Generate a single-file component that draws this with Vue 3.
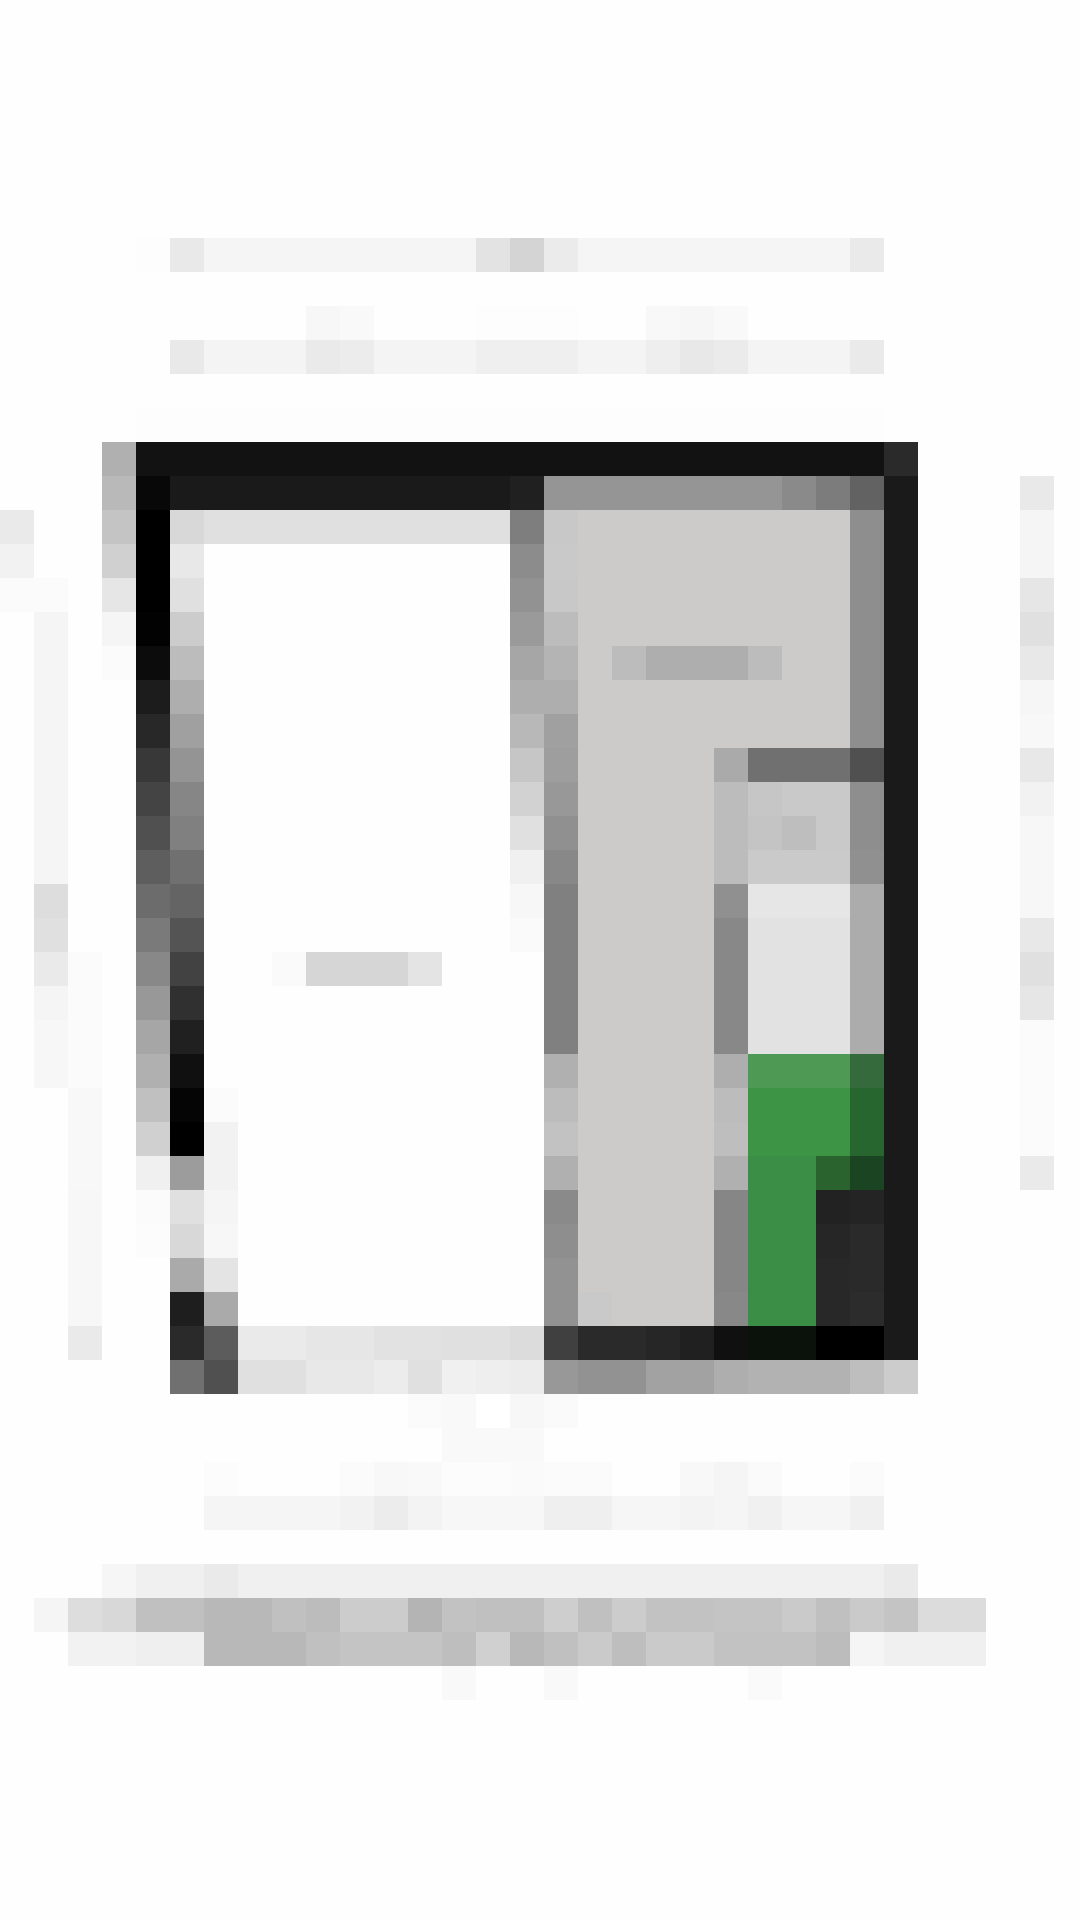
<script setup>
import { computed } from 'vue'

const COLS = 32
const ROWS = 57
const PAPER = 'fe'
const W = 'cccbc9' // warm grey panel
const G = '3b8e45' // green block

// Sparse mosaic: row -> "col:tone" or "from-to:tone". Two hex digits = grey, six = full colour.
const spec = {
  7: '4:fd 5:e9 6-13:f5 14:e3 15:d4 16:eb 17-24:f5 25:ea',
  9: '9:f7 10:f9 14-16:fd 19:f8 20:f6 21:f9',
  10: '5:e9 6-8:f4 9:ea 10:ec 11-13:f4 14-16:ef 17-18:f4 19:ee 20:e8 21:eb 22-24:f4 25:ea',
  12: '4-25:fd',
  13: '3:b0 4-25:12 26:2a',
  14: '3:b9 4:08 5-14:1a 15:20 16-22:95 23:8a 24:7c 25:62 26:1a 30:e9',
  15: `0:ea 3:c4 4:00 5:d8 6-14:e0 15:7e 16:c8 17-24:${W} 25:8e 26:1a 30:f5`,
  16: `0:f2 3:d0 4:00 5:e8 15:8c 16:c9 17-24:${W} 25:8e 26:1a 30:f5`,
  17: `0:fb 1:fb 3:e6 4:00 5:e0 15:92 16:c8 17-24:${W} 25:8e 26:1a 30:e6`,
  18: `1:f5 3:f5 4:02 5:cc 15:9a 16:bc 17-24:${W} 25:8e 26:1a 30:e0`,
  19: `1:f5 3:fb 4:0c 5:bc 15:a6 16:b4 17:${W} 18:bc 19-21:ae 22:bc 23-24:${W} 25:8e 26:1a 30:e8`,
  20: `1:f5 4:1c 5:ae 15:ae 16:ae 17-24:${W} 25:8e 26:1a 30:f6`,
  21: `1:f5 4:28 5:a0 15:b8 16:a0 17-24:${W} 25:8e 26:1a 30:f8`,
  22: `1:f5 4:38 5:94 15:c6 16:9e 17-20:${W} 21:aa 22-24:70 25:50 26:1a 30:e8`,
  23: `1:f5 4:44 5:86 15:d2 16:98 17-20:${W} 21:bc 22:c6 23-24:c9 25:8e 26:1a 30:f2`,
  24: `1:f5 4:50 5:80 15:e0 16:90 17-20:${W} 21:bc 22:c4 23:be 24:c9 25:8e 26:1a 30:f7`,
  25: `1:f5 4:5e 5:70 15:f0 16:88 17-20:${W} 21:bc 22-24:ca 25:90 26:1a 30:f7`,
  26: `1:dd 4:6c 5:64 15:f7 16:80 17-20:${W} 21:90 22-24:e6 25:ac 26:1a 30:f7`,
  27: `1:e0 4:7a 5:54 15:fa 16:80 17-20:${W} 21:88 22-24:e2 25:ac 26:1a 30:e8`,
  28: `1:ea 2:fb 4:88 5:42 8:fa 9-11:d6 12:e4 16:80 17-20:${W} 21:88 22-24:e2 25:ac 26:1a 30:e0`,
  29: `1:f5 2:fb 4:98 5:30 16:80 17-20:${W} 21:88 22-24:e2 25:ac 26:1a 30:e6`,
  30: `1:f7 2:fb 4:a6 5:20 16:80 17-20:${W} 21:88 22-24:e2 25:ac 26:1a 30:fb`,
  31: `1:f7 2:fb 4:b0 5:10 16:b0 17-20:${W} 21:ae 22-24:4e9a55 25:356b3c 26:1a 30:fb`,
  32: `2:f8 4:c0 5:05 6:fb 16:bc 17-20:${W} 21:bc 22-24:3d9445 25:27662f 26:1a 30:fb`,
  33: `2:f8 4:d0 5:00 6:f2 16:c2 17-20:${W} 21:be 22-24:3d9445 25:27662f 26:1a 30:fb`,
  34: `2:f8 4:f0 5:9c 6:f2 16:b0 17-20:${W} 21:b0 22-23:${G} 24:2a632e 25:1b4522 26:1a 30:ea`,
  35: `2:f7 4:fb 5:e0 6:f5 16:8a 17-20:${W} 21:86 22-23:${G} 24:22 25:24 26:1a`,
  36: `2:f7 4:fc 5:d8 6:f7 16:8e 17-20:${W} 21:86 22-23:${G} 24:26 25:2a 26:1a`,
  37: `2:f7 5:aa 6:e4 16:92 17-20:${W} 21:86 22-23:${G} 24:28 25:2a 26:1a`,
  38: `2:f7 5:1e 6:aa 16:92 17:c9 18-20:${W} 21:88 22-23:${G} 24:28 25:2c 26:1a`,
  39: '2:ea 5:2a 6:5c 7-8:ea 9-10:e6 11-12:e2 13-14:e0 15:dc 16:40 17-18:2a 19:26 20:20 21:10 22-23:0b120c 24-25:00 26:1a',
  40: '5:70 6:50 7-8:e0 9-10:e8 11:ec 12:e0 13:f0 14:ee 15:ec 16:98 17-18:92 19-20:a2 21:ae 22-24:b2 25:be 26:cc',
  41: '12:fb 13:f9 14:ff 15:f7 16:fa',
  42: '13-15:f9',
  43: '6:fc 10:fb 11:f8 12:f9 13-14:fc 15:fa 16-17:fb 20:f8 21:f5 22:fa 25:fb',
  44: '6-9:f5 10:f2 11:ec 12:f3 13-15:f7 16-17:ef 18-19:f6 20:f3 21:f5 22:f0 23-24:f6 25:f0',
  46: '3:f6 4-5:f0 6:ea 7-25:f0 26:ea',
  47: '1:f5 2:dd 3:d8 4-5:c0 6-7:b8 8:c0 9:bc 10-11:cc 12:b4 13:c2 14-15:c0 16:ce 17:c0 18:cc 19-20:c2 21-22:c4 23:ca 24:c0 25:ca 26:c4 27-28:dc',
  48: '2-3:f2 4-5:ef 6-8:b8 9:c0 10-12:c4 13:be 14:d0 15:b8 16:c0 17:ca 18:be 19-20:ca 21-23:c2 24:bc 25:f5 26-28:f0',
  49: '13:f9 16:f9 22:fa'
}

const tone = (t) => (t.length === 2 ? `#${t}${t}${t}` : `#${t}`)

const cells = computed(() => {
  const out = []
  for (let r = 0; r < ROWS; r++) {
    const row = new Array(COLS).fill(PAPER)
    for (const item of (spec[r] || '').split(' ').filter(Boolean)) {
      const [range, value] = item.split(':')
      const [a, b] = range.split('-').map(Number)
      for (let c = a; c <= (b ?? a); c++) row[c] = value
    }
    row.forEach((t, c) => out.push({ id: `${r}-${c}`, color: tone(t) }))
  }
  return out
})
</script>

<template>
  <main class="page">
    <div class="mosaic">
      <span
        v-for="cell in cells"
        :key="cell.id"
        class="cell"
        :style="{ backgroundColor: cell.color }"
      ></span>
    </div>
  </main>
</template>

<style scoped>
.page {
  width: 1080px;
  height: 1920px;
  overflow: hidden;
  background: #fefefe;
}
.mosaic {
  display: grid;
  grid-template-columns: repeat(32, 34px);
  grid-auto-rows: 34px;
  width: 1088px;
}
.cell {
  display: block;
}
</style>
<style>
html, body { margin: 0; background: #fefefe; }
</style>
